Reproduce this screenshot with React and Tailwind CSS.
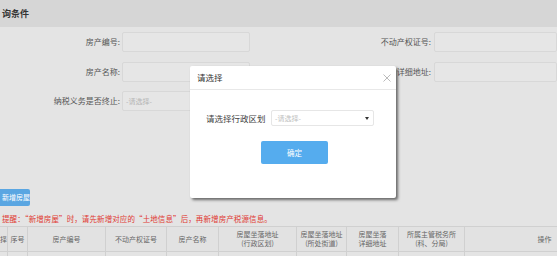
export default function App() {
  const cols = [
    { w: 'w-[8px]', t: ['择'] },
    { w: 'w-[20px]', t: ['序号'] },
    { w: 'w-[78px]', t: ['房产编号'] },
    { w: 'w-[61px]', t: ['不动产权证号'] },
    { w: 'w-[52px]', t: ['房产名称'] },
    { w: 'w-[78px]', t: ['房屋坐落地址', '(行政区划)'] },
    { w: 'w-[50px]', t: ['房屋坐落地址', '(所处街道)'] },
    { w: 'w-[52px]', t: ['房屋坐落', '详细地址'] },
    { w: 'w-[66px]', t: ['所属主管税务所', '(科、分局)'] },
    { w: 'w-[160px]', t: ['操作'] },
  ];

  return (
    <div
      className="relative w-[557px] h-[256px] overflow-hidden bg-[#e4e4e4] text-[#555]"
      style={{ fontFamily: '"Noto Sans CJK SC", "Noto Sans", sans-serif' }}
    >
      <div className="h-[27px] bg-[#d6d6d6] flex items-center pl-[2px] text-[9px] font-bold text-[#333]">
        询条件
      </div>

      <div className="pt-[5px] flex flex-col gap-[10px] text-[8px]">
        <div className="flex items-center h-[20px]">
          <div className="w-[120px] text-right">房产编号:</div>
          <div className="ml-[2px] w-[128px] h-full bg-[#e6e6e6] border border-[#d8d8d8] rounded-[2px]"></div>
          <div className="w-[181px] text-right">不动产权证号:</div>
          <div className="ml-[3px] flex-1 h-full bg-[#e6e6e6] border border-[#d8d8d8] rounded-[2px]"></div>
        </div>
        <div className="flex items-center h-[20px]">
          <div className="w-[120px] text-right">房产名称:</div>
          <div className="ml-[2px] w-[128px] h-full bg-[#e6e6e6] border border-[#d8d8d8] rounded-[2px]"></div>
          <div className="w-[181px] text-right">详细地址:</div>
          <div className="ml-[3px] flex-1 h-full bg-[#e6e6e6] border border-[#d8d8d8] rounded-[2px]"></div>
        </div>
        <div className="flex items-center h-[20px] -mt-[1px]">
          <div className="w-[120px] text-right">纳税义务是否终止:</div>
          <div className="ml-[2px] w-[128px] h-full bg-[#e6e6e6] border border-[#d8d8d8] rounded-[2px] flex items-center pl-[3px] text-[#b5b5b5] text-[7px]">
            -请选择-
          </div>
        </div>
      </div>

      <div className="mt-[78px] w-[30px] h-[17px] bg-[#5aa6e2] rounded-r-[2px] flex items-center text-white text-[7px] pl-[2px] whitespace-nowrap overflow-hidden">
        新增房屋
      </div>

      <div className="mt-[7px] pl-[2px] h-[11px] flex items-center text-[7.5px] text-[#e03a33] whitespace-nowrap tracking-[0.1px]">
        提醒：“新增房屋”时，请先新增对应的“土地信息”后，再新增房产税源信息。
      </div>

      <div className="mt-[2px] border-t border-[#d0d0d0] flex">
        {cols.map((c, i) => (
          <div key={i} className="flex flex-col shrink-0">
            <div
              className={`${c.w} h-[25px] shrink-0 border-r border-b border-[#d0d0d0] bg-[#e2e2e2] flex flex-col items-center justify-center text-[7px] leading-[9px] text-[#666] overflow-hidden whitespace-nowrap`}
            >
              {c.t.map((s, j) => (
                <span key={j}>{s}</span>
              ))}
            </div>
            <div className={`${c.w} h-[10px] border-r border-[#d0d0d0]`}></div>
          </div>
        ))}
      </div>

      <div className="absolute left-[190px] top-[66px] w-[206px] h-[132px] bg-white rounded-[2px] shadow-[2px_2px_3px_rgba(0,0,0,0.55)] flex flex-col">
        <div className="h-[24px] border-b border-[#e8e8e8] flex items-center justify-between pl-[7px] pr-[5px]">
          <span className="text-[8.5px] text-[#333]">请选择</span>
          <svg width="8" height="8" viewBox="0 0 8 8" stroke="#aaa" strokeWidth="0.8">
            <line x1="0.5" y1="0.5" x2="7.5" y2="7.5" />
            <line x1="7.5" y1="0.5" x2="0.5" y2="7.5" />
          </svg>
        </div>
        <div className="flex items-center mt-[20px] pl-[16px]">
          <span className="w-[65px] text-[8.5px] text-[#444]">请选择行政区划</span>
          <div className="w-[103px] h-[16px] border border-[#e6e6e6] rounded-[2px] flex items-center justify-between pl-[3px] pr-[4px]">
            <span className="text-[7px] text-[#c0c0c0]">-请选择-</span>
            <span className="w-0 h-0 border-l-[2px] border-r-[2px] border-t-[3px] border-l-transparent border-r-transparent border-t-[#333]"></span>
          </div>
        </div>
        <div className="flex justify-center mt-[15px] pl-[3px]">
          <div className="w-[67px] h-[23px] bg-[#55acee] rounded-[2px] flex items-center justify-center text-white text-[7.5px]">
            确定
          </div>
        </div>
      </div>
    </div>
  );
}
